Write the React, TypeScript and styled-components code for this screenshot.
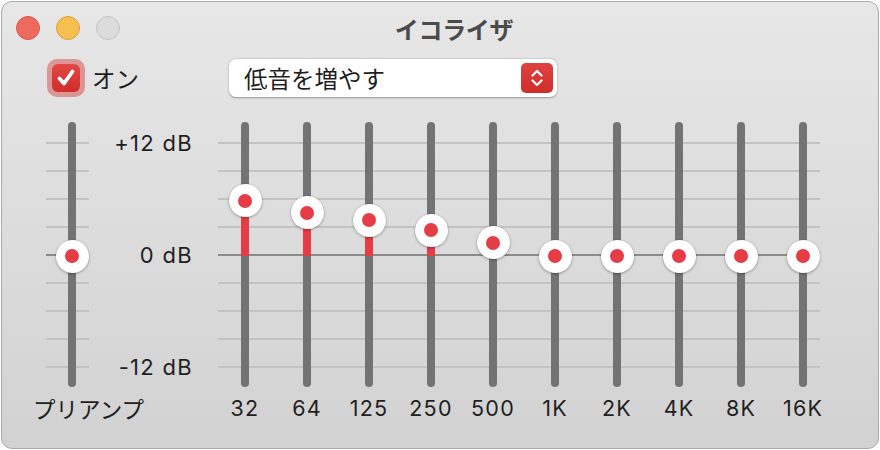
import styled, { createGlobalStyle } from "styled-components";

const ZERO = 134; // px from top of track to the 0 dB line
const PX_PER_DB = 113 / 12;

const GlobalStyle = createGlobalStyle`
  html, body { margin: 0; padding: 0; background: #ffffff; }
  body { font-family: "Inter", "Noto Sans CJK JP", sans-serif; color: #1f1f1f; }
  * { box-sizing: border-box; }
`;

const Window = styled.div`
  width: 878px;
  height: 448px;
  margin: 1px;
  border: 1px solid #a9a9a9;
  border-radius: 11px;
  background: linear-gradient(#e7e7e7, #d2d2d2);
  overflow: hidden;
  display: flex;
  flex-direction: column;
`;

const TitleBar = styled.div`
  height: 52px;
  display: grid;
  grid-template-columns: 1fr auto 1fr;
  align-items: center;
  padding-left: 14px;
`;

const Lights = styled.div`
  display: flex;
  gap: 16px;
`;

const Light = styled.span<{ $fill: string; $edge: string }>`
  width: 24px;
  height: 24px;
  border-radius: 50%;
  background: ${({ $fill }) => $fill};
  border: 1px solid ${({ $edge }) => $edge};
`;

const Title = styled.div`
  font-family: "Noto Sans CJK JP", sans-serif;
  font-weight: 700;
  font-size: 24px;
  color: #4b4b4b;
  letter-spacing: -0.3px;
  margin-left: 14px;
`;

const Controls = styled.div`
  height: 48px;
  display: grid;
  grid-template-columns: 182px 328px;
  align-items: center;
  padding-left: 45px;
`;

const Toggle = styled.label`
  display: flex;
  align-items: center;
  gap: 7px;
  font-family: "Noto Sans CJK JP", sans-serif;
  font-size: 23.5px;
`;

const CheckRing = styled.span`
  width: 38px;
  height: 38px;
  border-radius: 10px;
  background: rgba(214, 70, 70, 0.5);
  display: grid;
  place-items: center;
`;

const CheckBox = styled.span`
  width: 28px;
  height: 28px;
  border-radius: 6px;
  background: linear-gradient(#e24844, #cf2d2a);
  display: grid;
  place-items: center;
`;

const Popup = styled.div`
  height: 38px;
  border-radius: 7px;
  background: #ffffff;
  box-shadow: 0 0.5px 2px rgba(0, 0, 0, 0.35);
  display: flex;
  align-items: center;
  justify-content: space-between;
  padding: 0 4px 0 15px;
  font-family: "Noto Sans CJK JP", sans-serif;
  font-size: 23.5px;
`;

const Stepper = styled.span`
  width: 32px;
  height: 30px;
  border-radius: 5px;
  background: linear-gradient(#de4340, #cf2d2a);
  display: grid;
  place-items: center;
`;

const Equalizer = styled.div`
  display: flex;
  padding: 20px 0 0 44px;
`;

const Channel = styled.div<{ $width: number }>`
  position: relative;
  width: ${({ $width }) => $width}px;
  display: flex;
  flex-direction: column;
  align-items: center;
`;

const SliderBox = styled.div`
  position: relative;
  height: 265px;
  width: 100%;
  display: flex;
  justify-content: center;
`;

const Track = styled.div<{ $shift?: number }>`
  position: relative;
  width: 8px;
  height: 100%;
  border-radius: 4px;
  background: #737373;
  margin-left: ${({ $shift = 0 }) => $shift}px;
`;

const Fill = styled.div`
  position: absolute;
  left: 0;
  right: 0;
  background: #e63c46;
`;

const Knob = styled.div`
  position: absolute;
  left: 50%;
  width: 33px;
  height: 33px;
  margin: -16.5px 0 0 -16.5px;
  border-radius: 50%;
  background: #ffffff;
  box-shadow: 0 1px 3px rgba(0, 0, 0, 0.3), 0 0 0 0.5px rgba(0, 0, 0, 0.08);
  display: grid;
  place-items: center;
  z-index: 1;
  &::after {
    content: "";
    width: 14px;
    height: 14px;
    border-radius: 50%;
    background: #e63c46;
  }
`;

const Label = styled.div<{ $shift?: number }>`
  margin-top: 9px;
  height: 24px;
  line-height: 24px;
  font-size: 21.5px;
  letter-spacing: 1.2px;
  white-space: nowrap;
  transform: translateX(${({ $shift = 0 }) => $shift}px);
`;

const CjkLabel = styled(Label)`
  font-family: "Noto Sans CJK JP", sans-serif;
  font-size: 22.5px;
  letter-spacing: 0;
`;

/* tick lines lying under the tracks */
const Ticks = styled.div<{ $left: number; $right: number }>`
  position: absolute;
  top: 0;
  height: 265px;
  left: ${({ $left }) => $left}px;
  right: ${({ $right }) => $right}px;
  padding-top: 7px;
  display: flex;
  flex-direction: column;
`;

const TickRow = styled.div<{ $zero: boolean }>`
  height: 28px;
  background: linear-gradient(
    transparent 13px,
    ${({ $zero }) => ($zero ? "#8c8c8c" : "#c3c3c3")} 13px 15px,
    transparent 15px
  );
`;

const Scale = styled.div`
  width: 125px;
  height: 265px;
  padding: 7px 21px 0 0;
  display: flex;
  flex-direction: column;
`;

const ScaleRow = styled.div`
  height: 28px;
  line-height: 28px;
  text-align: right;
  font-size: 22px;
  letter-spacing: 1.3px;
`;

const Bands = styled.div`
  position: relative;
  display: flex;
`;

const CheckIcon = () => (
  <svg width="22" height="22" viewBox="0 0 22 22" aria-hidden>
    <path d="M4.5 11.5l4.5 5 8.5-12" fill="none" stroke="#fff" strokeWidth="3.8" strokeLinecap="round" strokeLinejoin="round" />
  </svg>
);

const ChevronsIcon = () => (
  <svg width="16" height="22" viewBox="0 0 16 22" aria-hidden>
    <path d="M3.5 8.5L8 4l4.5 4.5M3.5 13.5L8 18l4.5-4.5" fill="none" stroke="#fff" strokeWidth="2.2" strokeLinecap="round" strokeLinejoin="round" />
  </svg>
);

const TickLines = ({ left, right }: { left: number; right: number }) => (
  <Ticks $left={left} $right={right}>
    {Array.from({ length: 9 }, (_, i) => (
      <TickRow key={i} $zero={i === 4} />
    ))}
  </Ticks>
);

const Slider = ({ db, shift }: { db: number; shift?: number }) => {
  const y = ZERO - db * PX_PER_DB;
  return (
    <Track $shift={shift}>
      {db > 0 && <Fill style={{ top: y, height: ZERO - y }} />}
      <Knob style={{ top: y }} />
    </Track>
  );
};

const bands: [string, number][] = [
  ["32", 5.87],
  ["64", 4.57],
  ["125", 3.82],
  ["250", 2.76],
  ["500", 1.41],
  ["1K", 0],
  ["2K", 0],
  ["4K", 0],
  ["8K", 0],
  ["16K", 0],
];

export default function App() {
  return (
    <>
      <GlobalStyle />
      <Window>
        <TitleBar>
          <Lights>
            <Light $fill="#ee6a5f" $edge="#d65a4f" />
            <Light $fill="#f6bf4f" $edge="#daa23f" />
            <Light $fill="#dcdcdc" $edge="#c6c6c6" />
          </Lights>
          <Title>イコライザ</Title>
          <span />
        </TitleBar>

        <Controls>
          <Toggle>
            <CheckRing>
              <CheckBox>
                <CheckIcon />
              </CheckBox>
            </CheckRing>
            オン
          </Toggle>
          <Popup>
            低音を増やす
            <Stepper>
              <ChevronsIcon />
            </Stepper>
          </Popup>
        </Controls>

        <Equalizer>
          <Channel $width={43}>
            <TickLines left={0} right={0} />
            <SliderBox>
              <Slider db={0} shift={9} />
            </SliderBox>
            <CjkLabel $shift={21}>プリアンプ</CjkLabel>
          </Channel>

          <Scale>
            {Array.from({ length: 9 }, (_, i) => (
              <ScaleRow key={i}>
                {i === 0 ? "+12 dB" : i === 4 ? "0 dB" : i === 8 ? "-12 dB" : ""}
              </ScaleRow>
            ))}
          </Scale>

          <Bands>
            <TickLines left={4} right={14} />
            {bands.map(([name, db]) => (
              <Channel key={name} $width={62}>
                <SliderBox>
                  <Slider db={db} />
                </SliderBox>
                <Label>{name}</Label>
              </Channel>
            ))}
          </Bands>
        </Equalizer>
      </Window>
    </>
  );
}
